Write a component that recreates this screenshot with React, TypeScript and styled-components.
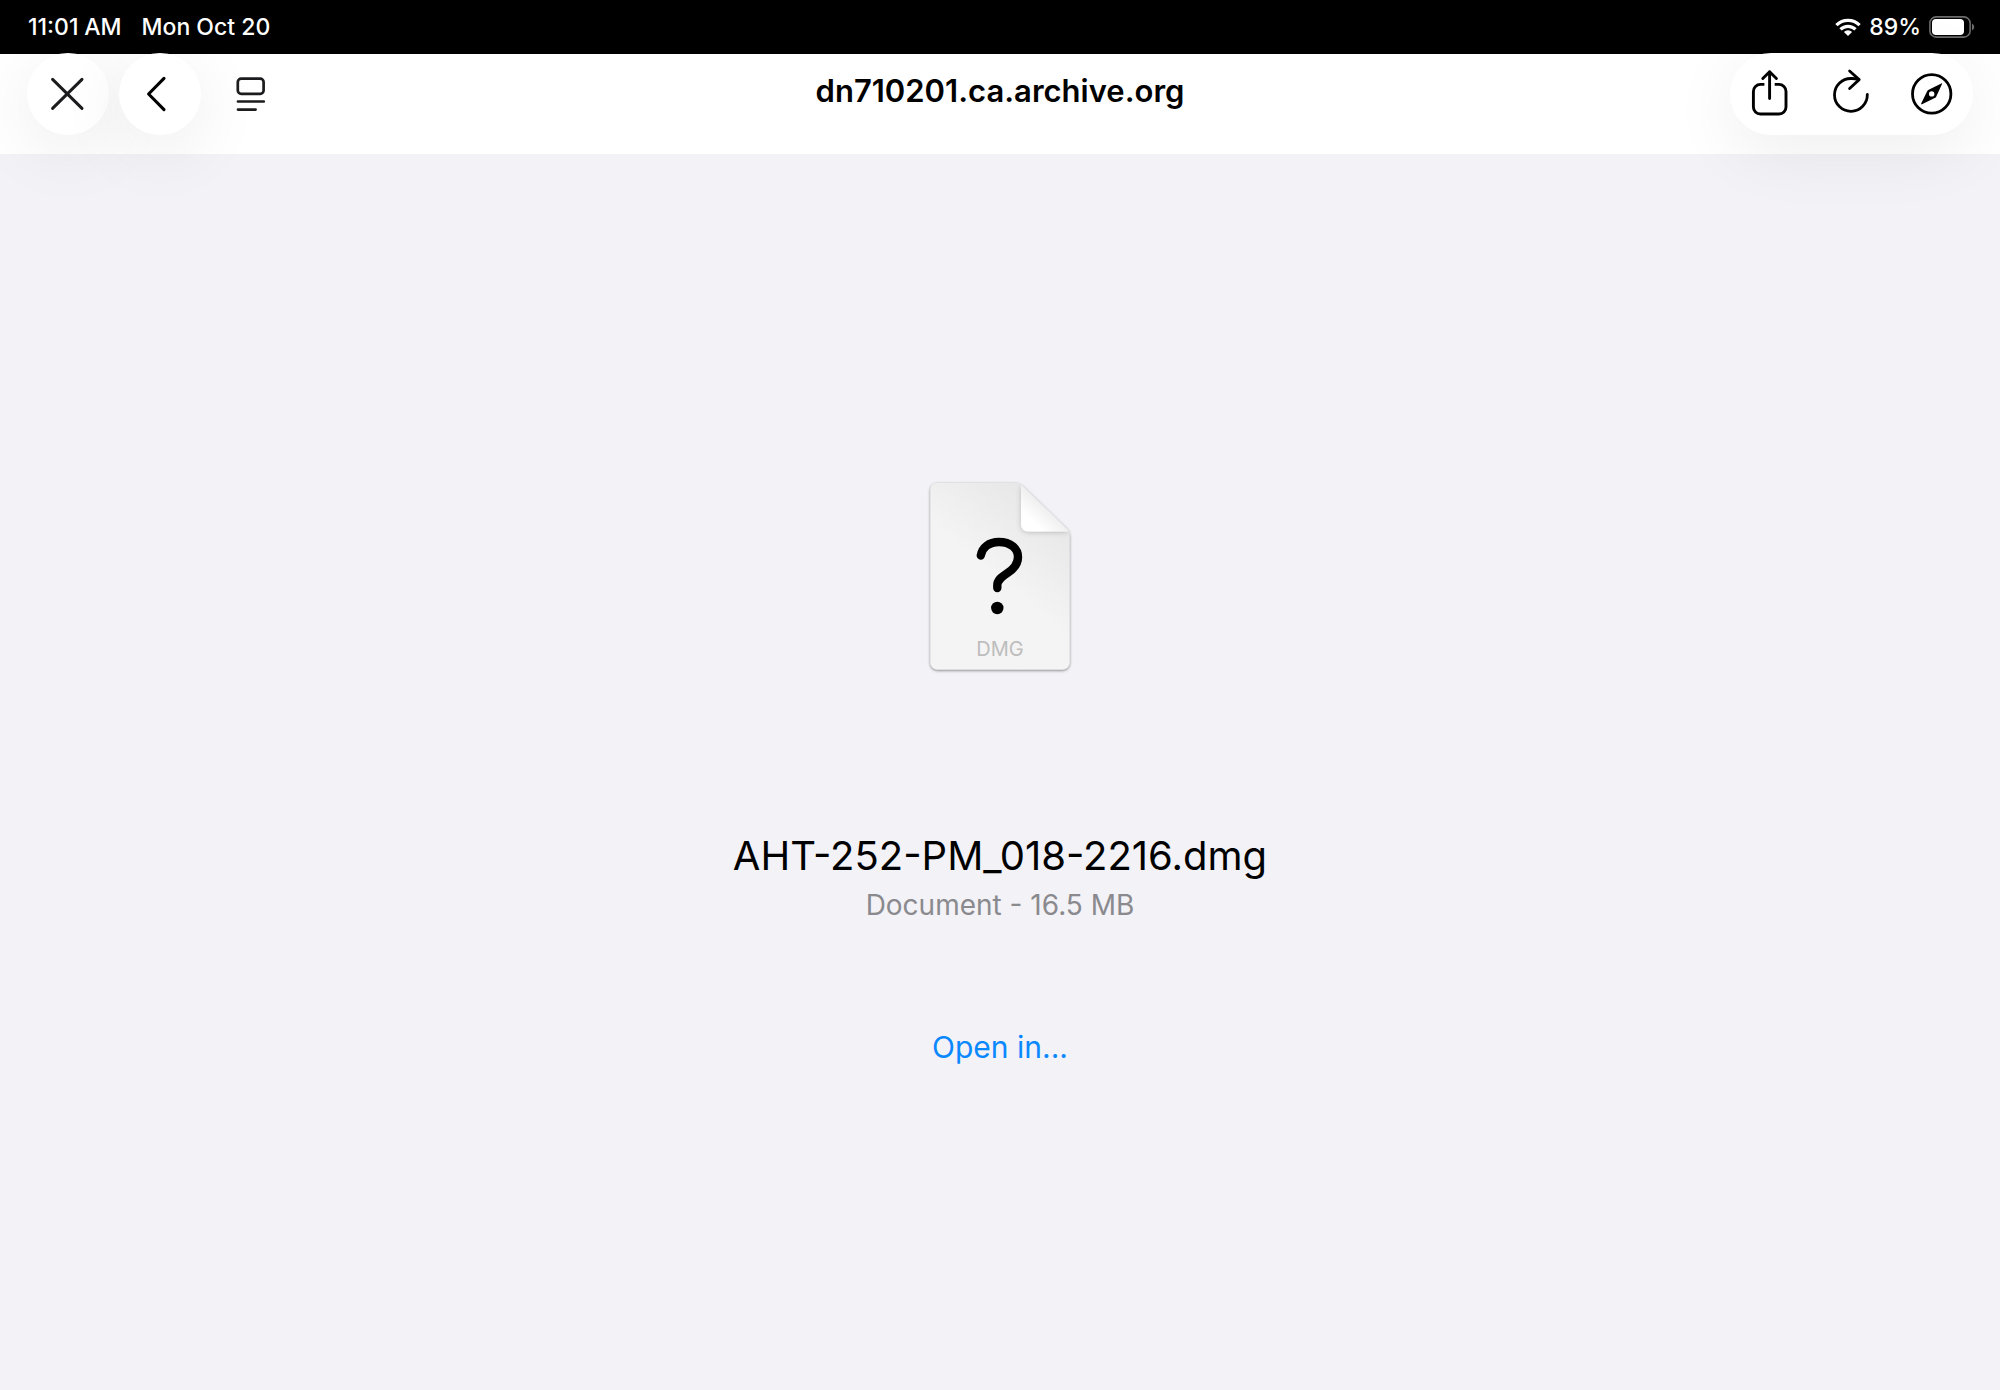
import React from "react";
import styled, { createGlobalStyle } from "styled-components";

const GlobalStyle = createGlobalStyle`
  * { box-sizing: border-box; }
  body {
    margin: 0;
    background: #f2f2f7;
    color: #000;
    font-family: Inter, "Liberation Sans", sans-serif;
  }
`;

const Screen = styled.div`
  display: flex;
  flex-direction: column;
  min-height: 100vh;
`;

const StatusBar = styled.div`
  display: flex;
  justify-content: space-between;
  align-items: center;
  height: 54px;
  padding: 0 24px 0 28px;
  background: #000;
  color: #fff;
  font-size: 23px;
  font-weight: 500;
  line-height: 28px;
`;

const StatusGroup = styled.div<{ $gap: number }>`
  display: flex;
  align-items: center;
  gap: ${(p) => p.$gap}px;
`;

const Toolbar = styled.header`
  position: relative;
  display: grid;
  grid-template-columns: 1fr auto 1fr;
  align-items: start;
  height: 100px;
  padding: 0 27px;
  background: #fff;
`;

const Actions = styled.div`
  display: flex;
  gap: 10px;
  margin-top: -1px;
`;

const Pill = styled.div`
  display: flex;
  justify-self: end;
  margin-top: -1px;
  border-radius: 41px;
  background: #fff;
  box-shadow: 0 16px 68px rgba(0, 0, 0, 0.07);
`;

const IconButton = styled.button<{ $width?: number; $raised?: boolean }>`
  width: ${(p) => p.$width ?? 82}px;
  height: 82px;
  padding: 0;
  border: 0;
  border-radius: 41px;
  background: ${(p) => (p.$raised ? "#fff" : "transparent")};
  box-shadow: ${(p) => (p.$raised ? "0 16px 68px rgba(0, 0, 0, 0.08)" : "none")};
  color: #000;
  cursor: pointer;

  svg {
    display: block;
  }
`;

const Title = styled.h1`
  margin: 17px 0 0;
  font-size: 31px;
  font-weight: 600;
  line-height: 40px;
`;

const Content = styled.main`
  flex: 1;
  display: flex;
  flex-direction: column;
  align-items: center;
  padding-top: 320px;
`;

const FileName = styled.h2`
  margin: 150px 0 0;
  font-size: 40px;
  font-weight: 400;
  line-height: 52px;
`;

const FileMeta = styled.p`
  margin: 3px 0 0;
  color: #8a8a8e;
  font-size: 28px;
  font-weight: 400;
  line-height: 40px;
`;

const OpenLink = styled.a`
  margin-top: 102px;
  color: #0a88ff;
  font-size: 30px;
  line-height: 40px;
  text-decoration: none;
`;

const stroke = {
  fill: "none",
  stroke: "currentColor",
  strokeLinecap: "round" as const,
  strokeLinejoin: "round" as const,
};

const WifiIcon = () => (
  <svg width="26" height="18" viewBox="0 0 26 18" aria-hidden="true">
    <g fill="none" stroke="#fff" strokeWidth="3.2">
      <path d="M1.4 7.2a16.4 16.4 0 0 1 23.2 0" />
      <path d="M5.5 11.4a10.6 10.6 0 0 1 15 0" />
    </g>
    <path d="M8.9 14a5.8 5.8 0 0 1 8.2 0L13 18z" fill="#fff" />
  </svg>
);

const BatteryIcon = () => (
  <svg width="47" height="22" viewBox="0 0 47 22" aria-hidden="true">
    <rect x="0.9" y="0.9" width="40.2" height="20.2" rx="6.2" fill="none" stroke="#6b6b6b" strokeWidth="1.6" />
    <rect x="3" y="3" width="32" height="16" rx="4" fill="#fff" />
    <path d="M43 7.4a4 4 0 0 1 0 7.2z" fill="#6b6b6b" />
  </svg>
);

const CloseIcon = () => (
  <svg width="82" height="82" viewBox="0 0 82 82" aria-hidden="true">
    <path {...stroke} stroke="#1c1c1e" strokeWidth="3" d="M25.6 26.4l29.4 29M55 26.4l-29.4 29" />
  </svg>
);

const BackIcon = () => (
  <svg width="82" height="82" viewBox="0 0 82 82" aria-hidden="true">
    <path {...stroke} strokeWidth="3.1" d="M45 25.4L29.6 41L45 56.6" />
  </svg>
);

const ReaderIcon = () => (
  <svg width="82" height="82" viewBox="0 0 82 82" aria-hidden="true">
    <g {...stroke} stroke="#1c1c1e" strokeWidth="2.7">
      <rect x="26.8" y="25.6" width="25.8" height="15.2" rx="3.4" />
      <path d="M27 48.5h25.8M27 56.6h17.6" />
    </g>
  </svg>
);

const ShareIcon = () => (
  <svg width="81" height="82" viewBox="0 0 81 82" aria-hidden="true">
    <g {...stroke} strokeWidth="2.9">
      <path strokeLinecap="butt" d="M34.4 31.4H30.4a7 7 0 0 0-7 7V54a7 7 0 0 0 7 7H49a7 7 0 0 0 7-7V38.4a7 7 0 0 0-7-7H44.7" />
      <path d="M39.6 18.8V45.5M32.8 25.5L39.6 18.8L46.4 25.5" />
    </g>
  </svg>
);

const ReloadIcon = () => (
  <svg width="81" height="82" viewBox="0 0 81 82" aria-hidden="true">
    <g {...stroke} strokeWidth="2.8">
      <path d="M56.3 41.5A16.4 16.4 0 1 1 40 25.5C43 25.4 45.5 25.9 47.5 26.4" />
      <path d="M38.6 18L48.2 26.6L38.6 35.5" />
    </g>
  </svg>
);

const CompassIcon = () => (
  <svg width="81" height="82" viewBox="0 0 81 82" aria-hidden="true">
    <circle cx="39.7" cy="40.9" r="19.2" {...stroke} strokeWidth="2.8" />
    <path
      fill="currentColor"
      fillRule="evenodd"
      d="M49.3 30.4C49.9 30.1 50.3 30.5 50 31.1L44.4 43.2Q44 44.2 43.2 44.8L30 51.3C29.3 51.6 28.9 51.2 29.2 50.5L35 38.4Q35.4 37.5 36.2 36.9ZM39.7 38.2a2.7 2.7 0 1 0 0 5.4a2.7 2.7 0 1 0 0-5.4Z"
    />
  </svg>
);

const sheetPath =
  "M17.5 9H94Q99 9 102.5 12L146.5 54.5Q149.5 57.5 149.5 61.5V188.5a7 7 0 0 1-7 7H17.5a7 7 0 0 1-7-7V16a7 7 0 0 1 7-7Z";

const DocumentIcon = () => (
  <svg width="160" height="206" viewBox="0 0 160 206" role="img" aria-label="DMG file">
    <defs>
      <linearGradient id="sheet" x1="128" y1="32" x2="72" y2="100" gradientUnits="userSpaceOnUse">
        <stop offset="0" stopColor="#e7e7e7" />
        <stop offset="1" stopColor="#f4f4f4" />
      </linearGradient>
      <linearGradient id="fold" x1="125" y1="33" x2="112" y2="47" gradientUnits="userSpaceOnUse">
        <stop offset="0" stopColor="#efefef" />
        <stop offset="1" stopColor="#ffffff" />
      </linearGradient>
      <filter id="sheetShadow" x="-10%" y="-10%" width="120%" height="120%">
        <feDropShadow dx="0" dy="1" stdDeviation="1.5" floodColor="#000" floodOpacity="0.5" />
      </filter>
      <filter id="foldShadow" x="-20%" y="-20%" width="140%" height="140%">
        <feDropShadow dx="0" dy="1" stdDeviation="2.5" floodColor="#000" floodOpacity="0.2" />
      </filter>
      <clipPath id="sheetClip">
        <path d={sheetPath} />
      </clipPath>
    </defs>
    <path filter="url(#sheetShadow)" fill="url(#sheet)" d={sheetPath} />
    <g clipPath="url(#sheetClip)">
      <path filter="url(#foldShadow)" fill="url(#fold)" d="M101 10.5V50.5a7 7 0 0 0 7 7H149.5Z" />
    </g>
    <path
      d="M60.8 81.5C62 73.5 69 68 79 68C90.5 68 98 74.5 98 83C98 90 94.5 94.5 87.5 99C80.5 103.5 77.3 106.5 77.3 111.5V114"
      fill="none"
      stroke="#000"
      strokeWidth="8.4"
      strokeLinecap="round"
    />
    <circle cx="77.3" cy="134" r="6.2" fill="#000" />
    <text x="80" y="182" textAnchor="middle" fontSize="20" fill="#bdbdbd">
      DMG
    </text>
  </svg>
);

export default function App() {
  return (
    <>
      <GlobalStyle />
      <Screen>
        <StatusBar>
          <StatusGroup $gap={20}>
            <span>11:01{"\u2005"}AM</span>
            <span>Mon Oct 20</span>
          </StatusGroup>
          <StatusGroup $gap={8}>
            <WifiIcon />
            <span>89%</span>
            <BatteryIcon />
          </StatusGroup>
        </StatusBar>
        <Toolbar>
          <Actions>
            <IconButton $raised aria-label="Close">
              <CloseIcon />
            </IconButton>
            <IconButton $raised aria-label="Back">
              <BackIcon />
            </IconButton>
            <IconButton aria-label="Page menu">
              <ReaderIcon />
            </IconButton>
          </Actions>
          <Title>dn710201.ca.archive.org</Title>
          <Pill>
            <IconButton $width={81} aria-label="Share">
              <ShareIcon />
            </IconButton>
            <IconButton $width={81} aria-label="Reload">
              <ReloadIcon />
            </IconButton>
            <IconButton $width={81} aria-label="Open in browser">
              <CompassIcon />
            </IconButton>
          </Pill>
        </Toolbar>
        <Content>
          <DocumentIcon />
          <FileName>AHT-252-PM_018-2216.dmg</FileName>
          <FileMeta>Document - 16.5 MB</FileMeta>
          <OpenLink href="#open">Open in...</OpenLink>
        </Content>
      </Screen>
    </>
  );
}
